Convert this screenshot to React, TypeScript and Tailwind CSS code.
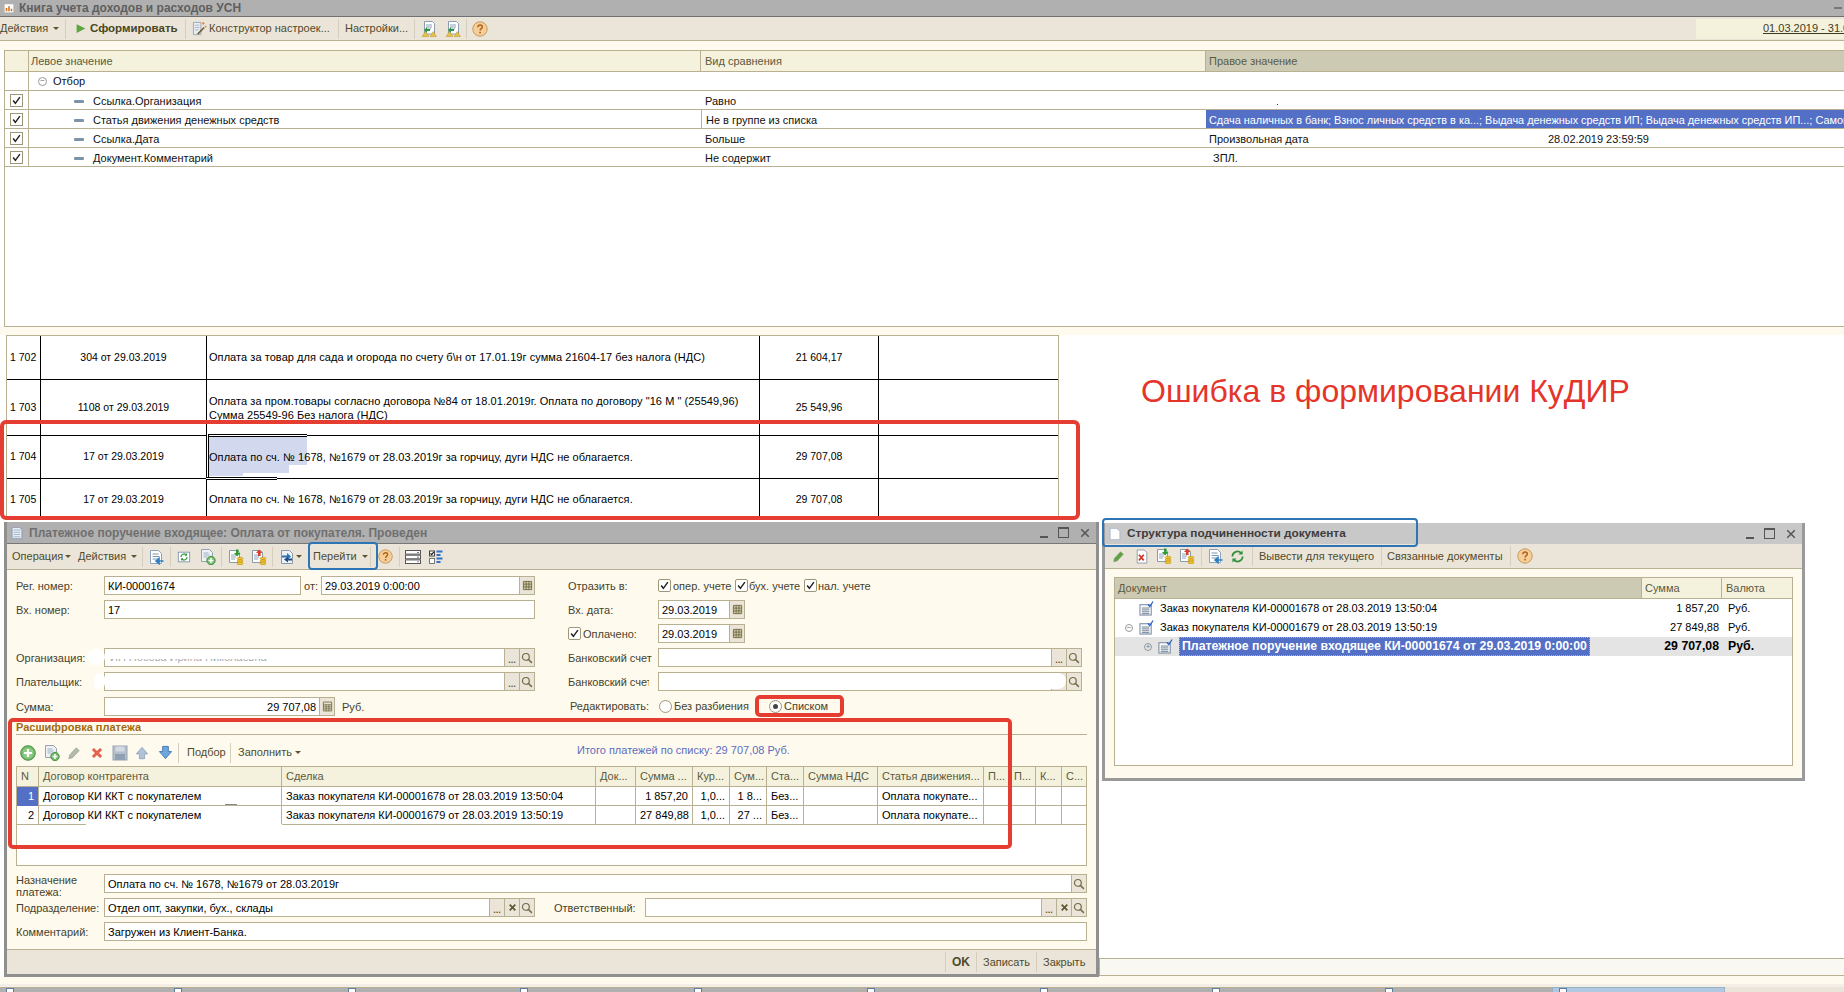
import { ReactNode } from "react";
import clsx from "clsx";

// small toolbar pictures, drawn on a 16x16 grid
function Svg({ className, children }: { className?: string; children: ReactNode }) {
  return (
    <svg viewBox="0 0 16 16" className={clsx("h-4 w-4 shrink-0", className)}>
      {children}
    </svg>
  );
}

const Help = ({ className }: { className?: string }) => (
  <Svg className={className}>
    <circle cx="8" cy="8" r="7.2" fill="#f7cd98" stroke="#c49a5c" strokeWidth="1" />
    <path d="M5.8 6.2c0-1.4 1-2.2 2.3-2.2s2.2.8 2.2 1.9c0 1.7-2.2 1.7-2.2 3.6" fill="none" stroke="#a8641a" strokeWidth="1.5" />
    <rect x="7.3" y="10.8" width="1.6" height="1.6" fill="#a8641a" />
  </Svg>
);

const Page = () => (
  <>
    <path d="M2.5 1.5h8l3 3v10h-11z" fill="#fff" stroke="#8ea3bd" strokeWidth="1" />
    <path d="M4.5 5h6M4.5 7.5h7M4.5 10h7" stroke="#7d96b5" strokeWidth="1" />
  </>
);

const DocBack = ({ className }: { className?: string }) => (
  <Svg className={className}>
    <Page />
    <path d="M15.5 12H8M8 12l3-2.6v5.2z" fill="#2e7fc0" stroke="#2e7fc0" strokeWidth="1.6" />
  </Svg>
);

const BoxRefresh = ({ className }: { className?: string }) => (
  <Svg className={className}>
    <rect x="1.5" y="2.5" width="13" height="11" fill="#fff" stroke="#7d93ad" />
    <path d="M4.5 8a3.5 3.5 0 0 1 6-2.4M11.5 8a3.5 3.5 0 0 1-6 2.4" fill="none" stroke="#2f9440" strokeWidth="1.4" />
    <path d="M11.5 3.5v3h-3zM4.5 12.5v-3h3z" fill="#2f9440" />
  </Svg>
);

const Refresh = ({ className }: { className?: string }) => (
  <Svg className={className}>
    <path d="M2.5 8a5.5 5.5 0 0 1 9.4-3.7M13.5 8a5.5 5.5 0 0 1-9.4 3.7" fill="none" stroke="#2f8f3a" strokeWidth="1.8" />
    <path d="M13.4 1.5v4.4H9zM2.6 14.5v-4.4H7z" fill="#2f8f3a" />
  </Svg>
);

const DocAdd = ({ className }: { className?: string }) => (
  <Svg className={className}>
    <path d="M1.5.5h8l3 3v9h-11z" fill="#eef2f6" stroke="#95a3ae" />
    <path d="M3.5 4h5M3.5 6h6M3.5 8h4" stroke="#9db0c2" />
    <circle cx="11" cy="11.5" r="4.2" fill="#74ba6c" stroke="#4c8f47" />
    <path d="M11 9v5M8.5 11.5h5" stroke="#fff" strokeWidth="1.5" />
  </Svg>
);

const DocCoins = ({ red, className }: { red?: boolean; className?: string }) => (
  <Svg className={className}>
    <path d="M1.5 1.5h8l2 2v10h-10z" fill="#fff" stroke="#8a9aa9" />
    <path d="M3 6h5M3 8h5M3 10h4" stroke="#90a4b8" />
    {red ? (
      <path d="M8 .5l3.5 3.5H9.6v3H7V4H5z" fill="#d8402d" />
    ) : (
      <path d="M8 7.5l3.5-3.5H9.6V.5H7V4H5z" fill="#2e9a35" transform="translate(1 0)" />
    )}
    <ellipse cx="12" cy="9.5" rx="3" ry="1.3" fill="#f3c530" stroke="#b98d10" strokeWidth=".6" />
    <ellipse cx="12" cy="12" rx="3" ry="1.3" fill="#f3c530" stroke="#b98d10" strokeWidth=".6" />
    <ellipse cx="12" cy="14.4" rx="3" ry="1.3" fill="#f3c530" stroke="#b98d10" strokeWidth=".6" />
  </Svg>
);

const DocSwap = ({ className }: { className?: string }) => (
  <Svg className={className}>
    <path d="M2.5 1.5h8l3 3v10h-11z" fill="#eef1f5" stroke="#8a97a6" />
    <path d="M3 6.5h5V4l4 3.5-4 3.5V8.5H3z" fill="#2d73b8" />
    <path d="M13 9.5H9v-2L5 10.5l4 3v-2h4z" fill="#1f4f8a" />
  </Svg>
);

const Rows = ({ className }: { className?: string }) => (
  <Svg className={className}>
    <rect x="0.5" y="1.5" width="15" height="3.6" fill="#fff" stroke="#555" />
    <rect x="0.5" y="6.2" width="15" height="3.6" fill="#fff" stroke="#555" />
    <rect x="0.5" y="10.9" width="15" height="3.6" fill="#fff" stroke="#555" />
    <path d="M12 3h2l-1 1.2zM12 7.7h2l-1 1.2zM12 12.4h2l-1 1.2z" fill="#222" />
  </Svg>
);

const CheckBars = ({ className }: { className?: string }) => (
  <Svg className={className}>
    <rect x="1.5" y="2" width="5" height="5" fill="#fff" stroke="#444" />
    <path d="M2.5 4.3l1.2 1.3 2-2.6" fill="none" stroke="#111" strokeWidth="1.2" />
    <rect x="1.5" y="9.5" width="5" height="5" fill="#fff" stroke="#777" />
    <path d="M8.5 2.5h6M8.5 6h4M8.5 9.5h6M8.5 13h4" stroke="#2f6fd0" strokeWidth="1.8" />
  </Svg>
);

const GreenPlus = ({ className }: { className?: string }) => (
  <Svg className={className}>
    <circle cx="8" cy="8" r="7.3" fill="#72b96b" stroke="#4d8f48" />
    <circle cx="8" cy="8" r="5.6" fill="#8ccb83" />
    <path d="M8 4v8M4 8h8" stroke="#fff" strokeWidth="2.2" />
  </Svg>
);

const Pencil = ({ color = "#b4b9ae", className }: { color?: string; className?: string }) => (
  <Svg className={className}>
    <path d="M10.5 2L14 5.2 6.3 13.5l-4.3 1 1-4.3z" fill={color} stroke="#8a8f84" strokeWidth=".6" />
  </Svg>
);

const RedX = ({ className }: { className?: string }) => (
  <Svg className={className}>
    <path d="M2.5 4.5l2-2L8 6l3.5-3.5 2 2L10 8l3.5 3.5-2 2L8 10l-3.5 3.5-2-2L6 8z" fill="#e8604f" stroke="#c9503f" strokeWidth=".5" />
  </Svg>
);

const Save = ({ className }: { className?: string }) => (
  <Svg className={className}>
    <rect x="1" y="1" width="14" height="14" fill="#b5c0cc" stroke="#97a3b0" />
    <rect x="3.5" y="1.5" width="9" height="5" fill="#d3dae2" />
    <rect x="3" y="9" width="10" height="6" fill="#8fa0b2" />
  </Svg>
);

const ArrowV = ({ down, className }: { down?: boolean; className?: string }) => (
  <Svg className={className}>
    <path
      d={down ? "M5 1.5h6V7h3.5L8 14.5 1.5 7H5z" : "M5 14.5h6V9h3.5L8 1.5 1.5 9H5z"}
      fill={down ? "#6ea5dc" : "#b1c3d6"}
      stroke={down ? "#3f78b0" : "#93a6ba"}
    />
  </Svg>
);

const DocX = ({ className }: { className?: string }) => (
  <Svg className={className}>
    <path d="M2.5.5h8l3 3v12h-11z" fill="#fff" stroke="#8a97a6" />
    <path d="M4.5 6l5.5 6.5M10 6l-5.5 6.5" stroke="#d2362a" strokeWidth="2" />
  </Svg>
);

const DocCheck = () => (
  <Svg className="h-[15px] w-[17px]">
    <rect x="1" y="4" width="12" height="11" fill="#fafcff" stroke="#6b7f98" />
    <path d="M3 7.5h8M3 9.5h8M3 11.5h8M3 13.5h8" stroke="#44586f" strokeWidth=".8" />
    <path d="M9.5 3.5l2 2.5L15 .5" fill="none" stroke="#2460c8" strokeWidth="1.3" />
  </Svg>
);

const Wand = ({ className }: { className?: string }) => (
  <Svg className={className}>
    <path d="M1.5 1.5h8v13h-8z" fill="#e9edf2" stroke="#99a6b3" />
    <path d="M3 4.5h5M3 7h5M3 9.5h4" stroke="#a8b5c2" />
    <path d="M6 14l7-7" stroke="#6c5a32" strokeWidth="1.6" />
    <path d="M12 1v3M10.5 2.5h3M14.5 5v2M13.5 6h2" stroke="#e0892c" strokeWidth="1" />
  </Svg>
);

const ReportArrow = ({ color, className }: { color: string; className?: string }) => (
  <Svg className={className}>
    <path d="M3.5.5h8l2 2V13h-10z" fill="#fff" stroke="#8d9db0" />
    <path d="M5 4h6M5 6h6M5 8h5" stroke="#8ba0b5" />
    <path d="M8 15.5H1l3.5-5zM15.5 15.5H9l3.3-5z" fill="#e8c14a" stroke="#b59421" strokeWidth=".5" />
    <path d="M3 9l3-3v2h3v2H6v2z" fill={color} />
  </Svg>
);

const Caret = ({ className }: { className?: string }) => (
  <span className={clsx("h-0 w-0 shrink-0 border-x-[3px] border-t-[3px] border-x-transparent border-t-[#5c5630]", className)} />
);

const Sep = ({ className }: { className?: string }) => <span className={clsx("h-[20px] w-px shrink-0 bg-[#d5cebd]", className)} />;

const WinButtons = ({ className }: { className?: string }) => (
  <div className={clsx("flex items-center", className)}>
    <span className="mt-[8px] h-[2px] w-[8px] bg-[#555]" />
    <span className="ml-[10px] h-[11px] w-[11px] border border-t-2 border-[#555]" />
    <Svg className="ml-[11px] h-[10px] w-[10px]">
      <path d="M2 2l12 12M14 2L2 14" stroke="#555" strokeWidth="2.4" />
    </Svg>
  </div>
);

type BtnKind = "dots" | "search" | "x" | "cal" | "calc";

function FieldBtn({ kind }: { kind: BtnKind }) {
  return (
    <span className="flex h-full w-[15px] shrink-0 items-center justify-center border-l border-[#b8b091] bg-[#ebe5d9]">
      {kind === "dots" && <span className="mt-[6px] text-[9px] font-bold leading-none text-[#5c5630]">...</span>}
      {kind === "x" && (
        <Svg className="h-[9px] w-[9px]">
          <path d="M3 3l10 10M13 3L3 13" stroke="#5c5630" strokeWidth="3" />
        </Svg>
      )}
      {kind === "search" && (
        <Svg className="h-[12px] w-[12px]">
          <circle cx="6.5" cy="6.5" r="4.5" fill="none" stroke="#6f6a45" strokeWidth="1.6" />
          <path d="M10 10l4.5 4.5" stroke="#6f6a45" strokeWidth="2" />
        </Svg>
      )}
      {kind === "cal" && (
        <Svg className="h-[11px] w-[11px]">
          <path d="M2 2h12v12H2zM2 6h12M2 10h12M6 2v12M10 2v12" fill="#cfc9a8" stroke="#6f6a45" strokeWidth="1.3" />
        </Svg>
      )}
      {kind === "calc" && (
        <Svg className="h-[11px] w-[11px]">
          <path d="M2 1.5h12v13H2zM2 5.5h12M2 8.5h12M2 11.5h12M6 5.5v9M10 5.5v9" fill="#e5e0c8" stroke="#6f6a45" strokeWidth="1.2" />
        </Svg>
      )}
    </span>
  );
}

function Field({ className, children, btns = [], right }: { className?: string; children?: ReactNode; btns?: BtnKind[]; right?: boolean }) {
  return (
    <div className={clsx("relative flex h-[19px] shrink-0 border border-[#b8b091] bg-white", className)}>
      <div className={clsx("min-w-0 flex-1 overflow-hidden whitespace-nowrap px-[3px] leading-[18px] text-black", right && "text-right")}>{children}</div>
      {btns.map((b, i) => (
        <FieldBtn key={i} kind={b} />
      ))}
    </div>
  );
}

function Check({ className }: { className?: string }) {
  return (
    <span className={clsx("flex h-[13px] w-[13px] shrink-0 items-center justify-center rounded-[2px] border border-[#9d977a] bg-white", className)}>
      <Svg className="h-[9px] w-[9px]">
        <path d="M2 8l4 5 8-11" fill="none" stroke="#222" strokeWidth="2.6" />
      </Svg>
    </span>
  );
}

function Radio({ on }: { on?: boolean }) {
  return (
    <span className="flex h-[13px] w-[13px] shrink-0 items-center justify-center rounded-full border border-[#9d977a] bg-white">
      {on && <span className="h-[5px] w-[5px] rounded-full bg-[#444]" />}
    </span>
  );
}

function FilterRow({ name, op, children, selected }: { name: string; op: string; children?: ReactNode; selected?: boolean }) {
  return (
    <div className="flex h-[19px] border-b border-[#b8b091]">
      <div className="flex w-[24px] items-center justify-center border-r border-[#b8b091]">
        <Check className="rounded-none" />
      </div>
      <div className="flex w-[672px] items-center pt-[3px]">
        <span className="ml-[45px] h-[3px] w-[10px] rounded-[1px] bg-[#7f93a8]" />
        <span className="ml-[9px]">{name}</span>
      </div>
      <div className={clsx("flex w-[505px] items-center pl-[4px] pt-[3px]", selected && "border-l border-[#b8b091]")}>{op}</div>
      {children}
    </div>
  );
}

type ReportRow = { n: string; doc: string; text: ReactNode; sum: string; h: string; active?: boolean; pad?: string };

const lineText = "Оплата по сч. № 1678, №1679 от 28.03.2019г за горчицу, дуги  НДС не облагается.";

const reportRows: ReportRow[] = [
  { n: "1 702", doc: "304 от 29.03.2019", text: "Оплата за товар для сада и огорода по счету б\\н от 17.01.19г сумма 21604-17 без налога (НДС)", sum: "21 604,17", h: "h-[44px]" },
  {
    n: "1 703",
    doc: "1108 от 29.03.2019",
    text: (
      <span className="block pt-[1px] leading-[14px]">
        Оплата за пром.товары согласно договора №84 от 18.01.2019г. Оплата по договору "16 М " (25549,96)
        <br />
        Сумма 25549-96 Без налога (НДС)
      </span>
    ),
    sum: "25 549,96",
    h: "h-[56px]",
  },
  { n: "1 704", doc: "17 от 29.03.2019", text: lineText, sum: "29 707,08", h: "h-[43px]", active: true },
  { n: "1 705", doc: "17 от 29.03.2019", text: lineText, sum: "29 707,08", h: "h-[38px]", pad: "pt-[4px]" },
];

const payCols = "grid grid-cols-[22px_243px_314px_40px_57px_37px_37px_37px_74px_106px_26px_26px_26px_25px]";
const payHead = ["N", "Договор контрагента", "Сделка", "Док...", "Сумма ...", "Кур...", "Сум...", "Ста...", "Сумма НДС", "Статья движения...", "П...", "П...", "К...", "С..."];

function PayRow({ n, active, deal, sum, a, b }: { n: string; active?: boolean; deal: string; sum: string; a: string; b: string }) {
  const cells: [string, string?][] = [
    ["Договор КИ ККТ с покупателем"],
    [deal],
    [""],
    [sum, "r"],
    [a, "r"],
    [b, "r"],
    ["Без..."],
    [""],
    ["Оплата покупате..."],
    [""],
    [""],
    [""],
    [""],
  ];
  return (
    <div className={clsx(payCols, "h-[19px] border-b border-[#b8b091] text-black")}>
      <div className={clsx("border-r border-[#b8b091] pr-[4px] text-right leading-[19px]", active ? "bg-[#5470c6] text-white" : "")}>{n}</div>
      {cells.map(([t, al], i) => (
        <div key={i} className={clsx("overflow-hidden whitespace-nowrap border-r border-[#b8b091] px-[4px] leading-[19px]", al && "px-[3px] text-right")}>
          {t}
        </div>
      ))}
    </div>
  );
}

function TreeRow({ indent, sign, text, sum, selected }: { indent: string; sign?: "-" | "+"; text: string; sum: string; selected?: boolean }) {
  return (
    <div className={clsx("grid h-[19px] grid-cols-[527px_80px_72px] items-center text-black", selected && "bg-[#e4e4e4] text-[12.3px] font-bold")}>
      <div className={clsx("flex h-full items-center", indent)}>
        {sign && (
          <span className="mr-[5px] flex h-[8px] w-[8px] items-center justify-center rounded-full border border-[#999] text-[8px] font-normal leading-none text-[#777]">{sign === "-" ? "−" : "+"}</span>
        )}
        <DocCheck />
        <span className={clsx("ml-[5px] flex h-full items-center", selected && "-ml-[1px] w-[411px] whitespace-nowrap bg-[#5470c6] pl-[3px] text-white outline-1 -outline-offset-1 outline-dotted outline-[#9fb0e2]")}>{text}</span>
      </div>
      <div className="pr-[3px] text-right">{sum}</div>
      <div className="pl-[6px]">Руб.</div>
    </div>
  );
}

export default function App() {
  return (
    <div className="relative h-[992px] w-[1844px] overflow-hidden bg-white font-['Liberation_Sans',sans-serif] text-[11px] text-[#111]">
      {/* report window title */}
      <div className="flex h-[17px] items-center border-b border-[#707070] bg-[#b0b0b0]">
        <Svg className="ml-[4px] h-[12px] w-[10px]">
          <rect x="1" y="2" width="14" height="13" fill="#fff" />
          <path d="M4 13V8M8 13V5M12 13V9" stroke="#d2701e" strokeWidth="2.5" />
        </Svg>
        <span className="ml-[5px] text-[12px] font-bold text-[#5f5f5f]">Книга учета доходов и расходов УСН</span>
        <span className="ml-auto mr-[2px] h-[2px] w-[8px] bg-[#777]" />
      </div>

      {/* report toolbar */}
      <div className="flex h-[24px] items-center border-b border-[#b8b091] bg-[#ebe5d9] text-[#4f4b2d]">
        <div className="flex w-[65px] items-center">
          Действия
          <Caret className="ml-[5px]" />
        </div>
        <Sep />
        <Svg className="ml-[10px] h-[11px] w-[10px]">
          <path d="M1 1l14 7-14 7z" fill="#5da63f" />
        </Svg>
        <span className="ml-[4px] w-[95px] whitespace-nowrap text-[11.5px] font-bold text-[#4a4620]">Сформировать</span>
        <Sep />
        <Wand className="ml-[6px] h-[15px] w-[15px]" />
        <span className="ml-[2px] w-[129px] whitespace-nowrap">Конструктор настроек...</span>
        <Sep />
        <span className="ml-[6px] w-[69px] whitespace-nowrap">Настройки...</span>
        <Sep />
        <ReportArrow color="#2f9440" className="ml-[6px]" />
        <ReportArrow color="#2f9440" className="ml-[8px]" />
        <Sep className="ml-[5px]" />
        <Help className="ml-[5px]" />
        <div className="ml-auto flex h-[20px] w-[148px] items-center bg-[#f4f1dc] pl-[67px]">
          <span className="whitespace-nowrap text-[#3f3c1e] underline">01.03.2019 - 31.03.2019</span>
        </div>
      </div>
      <div className="h-[9px] bg-[#fffaee]" />

      {/* filter settings */}
      <div className="ml-[4px] h-[277px] border-b border-l border-[#b8b091]">
        <div className="flex h-[22px] border-y border-[#b8b091] bg-[#f4f1dc] text-[#5c5a40]">
          <div className="w-[24px] border-r border-[#b8b091]" />
          <div className="flex w-[672px] items-center border-r border-[#b8b091] pl-[2px]">Левое значение</div>
          <div className="flex w-[505px] items-center border-r border-[#b8b091] pl-[4px]">Вид сравнения</div>
          <div className="flex flex-1 items-center bg-[#cdcab4] pl-[3px]">Правое значение</div>
        </div>
        <div className="flex h-[19px] items-center border-b border-[#b8b091]">
          <div className="h-full w-[24px] border-r border-[#b8b091]" />
          <span className="ml-[9px] flex h-[9px] w-[9px] items-center justify-center rounded-full border border-[#999] text-[8px] leading-none text-[#777]">−</span>
          <span className="ml-[6px]">Отбор</span>
        </div>
        <FilterRow name="Ссылка.Организация" op="Равно">
          <div className="relative flex-1">
            <span className="absolute left-[71px] top-[13px] h-[1px] w-[1px] bg-[#333]" />
          </div>
        </FilterRow>
        <FilterRow name="Статья движения денежных средств" op="Не в группе из списка" selected>
          <div className="flex-1 overflow-hidden whitespace-nowrap bg-[#5470c6] pl-[3px] pt-[1px] text-[10.9px] leading-[18px] text-white">
            Сдача наличных в банк; Взнос личных средств в ка...; Выдача денежных средств ИП; Выдача денежных средств ИП...; Самоинкассация
          </div>
        </FilterRow>
        <FilterRow name="Ссылка.Дата" op="Больше">
          <div className="flex flex-1 items-center pl-[3px] pt-[3px]">
            <span className="w-[339px]">Произвольная дата</span>
            <span>28.02.2019 23:59:59</span>
          </div>
        </FilterRow>
        <FilterRow name="Документ.Комментарий" op="Не содержит">
          <div className="flex flex-1 items-center pl-[7px] pt-[3px]">ЗПЛ.</div>
        </FilterRow>
      </div>
      <div className="h-[8px] bg-[#fffaee]" />

      {/* spreadsheet result */}
      <div className="flex h-[641px] flex-col">
        <div className="ml-[6px] h-[182px] w-[1053px] border-x border-t border-[#b8b091] text-[10.5px] text-black">
          {reportRows.map((r) => (
            <div key={r.n} className={clsx("grid grid-cols-[34px_166px_553px_119px_1fr] border-b border-black", r.h)}>
              <div className={clsx("flex items-center border-r border-black pl-[3px]", r.pad)}>{r.n}</div>
              <div className={clsx("flex items-center justify-center border-r border-black", r.pad)}>{r.doc}</div>
              <div className={clsx("relative flex items-center border-r border-black pl-[2px] text-[11px] tracking-[0.06px]", r.pad)}>
                {r.active && (
                  <>
                    <span className="absolute left-[1px] top-[1px] h-[28px] w-[99px] bg-[#d2d9ee]" />
                    <span className="absolute left-[1px] top-[29px] h-[8px] w-[81px] bg-[#d2d9ee]" />
                    <span className="absolute left-[1px] top-[37px] h-[3px] w-[35px] bg-[#d2d9ee]" />
                    <span className="absolute -top-[2px] left-[-1px] h-[3px] w-[101px] border-y border-black bg-white" />
                    <span className="absolute -top-[2px] left-[-1px] h-[44px] w-[3px] border-x border-black bg-white" />
                    <span className="absolute left-[-1px] top-[41px] h-[3px] w-[71px] border-y border-black bg-white" />
                  </>
                )}
                <span className="relative">{r.text}</span>
              </div>
              <div className={clsx("flex items-center justify-center border-r border-black", r.pad)}>{r.sum}</div>
              <div />
            </div>
          ))}
        </div>
        <div className="ml-auto mt-auto h-[18px] w-[745px] border border-r-0 border-[#b8b091] bg-[#faf8f2]" />
      </div>
      <div className="h-[8px] bg-[#fffaee]" />
      <div className="h-[3px] bg-[#f3efe6]" />

      {/* task bar, cut by the bottom of the picture */}
      <div className="flex h-[5px] bg-[#ebe5d9]">
        {["w-[168px]", "w-[174px]", "w-[172px]", "w-[174px]", "w-[173px]", "w-[173px]", "w-[172px]", "w-[173px]", "w-[173px]"].map((w, i) => (
          <div key={i} className={clsx(w, "border-r border-t border-[#b8b091] bg-[#b0b0b0] pl-[6px]")}>
            <span className="block h-[4px] w-[8px] border border-b-0 border-[#5a7da0] bg-white" />
          </div>
        ))}
        <div className="w-[173px] border-x border-t border-[#9ab0c4] bg-[#b0c9e0] pl-[6px]">
          <span className="block h-[4px] w-[8px] border border-b-0 border-[#5a7da0] bg-white" />
        </div>
      </div>

      <div className="pointer-events-none absolute left-[1141px] top-[371px] whitespace-nowrap text-[32px] leading-[40px] text-[#e5352b]">Ошибка в формировании КуДИР</div>

      {/* payment order window */}
      <div className="absolute left-[4px] top-[522px] flex h-[455px] w-[1095px] flex-col border-x-[3px] border-b-[3px] border-[#8f8f8f] bg-[#fffaee] text-[#45432c]">
        <div className="flex h-[22px] shrink-0 items-center border-b border-[#777] bg-[#b0b0b0]">
          <Svg className="ml-[4px] h-[14px] w-[12px]">
            <path d="M1.5.5h10l3 3v12h-13z" fill="#e8eef5" stroke="#7f94ad" />
            <path d="M3.5 4h9M3.5 7h9M3.5 10h9M3.5 13h9" stroke="#8ea5c0" />
          </Svg>
          <span className="ml-[6px] text-[12px] font-bold text-[#6f6f6f]">Платежное поручение входящее: Оплата от покупателя. Проведен</span>
          <WinButtons className="ml-auto mr-[6px]" />
        </div>

        <div className="flex h-[26px] shrink-0 items-center border-b border-[#b8b091] bg-[#ebe5d9] text-[#4f4b2d]">
          <span className="ml-[5px] w-[48px]">Операция</span>
          <Caret className="ml-[5px]" />
          <span className="ml-[7px] w-[48px]">Действия</span>
          <Caret className="ml-[5px]" />
          <Sep className="ml-[5px]" />
          <DocBack className="ml-[5px]" />
          <Sep className="ml-[6px]" />
          <BoxRefresh className="ml-[6px] h-[14px] w-[14px]" />
          <DocAdd className="ml-[9px]" />
          <Sep className="ml-[5px]" />
          <DocCoins className="ml-[6px]" />
          <DocCoins red className="ml-[7px]" />
          <Sep className="ml-[5px]" />
          <DocSwap className="ml-[6px]" />
          <Caret className="ml-[1px]" />
          <span className="ml-[11px] w-[44px]">Перейти</span>
          <Caret className="ml-[5px]" />
          <Sep className="ml-[2px]" />
          <Help className="ml-[7px] h-[15px] w-[15px]" />
          <Sep className="ml-[6px]" />
          <Rows className="ml-[5px]" />
          <CheckBars className="ml-[7px]" />
        </div>

        <div className="flex h-[147px] shrink-0">
          <div className="ml-[9px] w-[519px]">
            <div className="mt-[6px] flex items-center">
              <span className="w-[88px] pt-[1px]">Рег. номер:</span>
              <Field className="w-[197px]">КИ-00001674</Field>
              <span className="ml-[3px] w-[17px] pt-[1px]">от:</span>
              <Field className="w-[214px]" btns={["cal"]}>
                29.03.2019  0:00:00
              </Field>
            </div>
            <div className="mt-[5px] flex items-center">
              <span className="w-[88px] pt-[1px]">Вх. номер:</span>
              <Field className="w-[431px]">17</Field>
            </div>
            <div className="relative mt-[29px] flex items-center">
              <span className="w-[88px] pt-[1px]">Организация:</span>
              <Field className="w-[431px]" btns={["dots", "search"]}>
                <span className="ml-[2px] mt-[10px] block h-[4px] overflow-hidden">
                  <span className="-mt-[8px] block leading-[12px] text-[#aaa]">ИП Носова Ирина Николаевна</span>
                </span>
              </Field>
              <span className="absolute left-[71px] top-[1px] h-[16px] w-[18px] rounded-full bg-white" />
            </div>
            <div className="relative mt-[5px] flex items-center">
              <span className="w-[88px] pt-[1px]">Плательщик:</span>
              <Field className="w-[431px]" btns={["dots", "search"]} />
              <span className="absolute left-[78px] top-[1px] h-[16px] w-[11px] rounded-full bg-white" />
            </div>
            <div className="mt-[6px] flex items-center">
              <span className="w-[88px] pt-[1px]">Сумма:</span>
              <Field className="h-[18px] w-[231px]" btns={["calc"]} right>
                29 707,08
              </Field>
              <span className="ml-[7px] pt-[1px]">Руб.</span>
            </div>
          </div>

          <div className="ml-[33px] w-[514px]">
            <div className="mt-[6px] flex h-[19px] items-center">
              <span className="w-[90px] pt-[1px]">Отразить в:</span>
              <Check />
              <span className="ml-[2px] w-[62px] pt-[1px]">опер. учете</span>
              <Check />
              <span className="ml-[1px] w-[55px] pt-[1px]">бух. учете</span>
              <Check />
              <span className="ml-[1px] pt-[1px]">нал. учете</span>
            </div>
            <div className="mt-[5px] flex items-center">
              <span className="w-[90px] pt-[1px]">Вх. дата:</span>
              <Field className="w-[87px]" btns={["cal"]}>
                29.03.2019
              </Field>
            </div>
            <div className="mt-[5px] flex items-center">
              <Check />
              <span className="ml-[2px] w-[75px] pt-[1px]">Оплачено:</span>
              <Field className="w-[87px]" btns={["cal"]}>
                29.03.2019
              </Field>
            </div>
            <div className="mt-[5px] flex items-center">
              <span className="w-[84px] overflow-hidden whitespace-nowrap pt-[1px]">Банковский счет:</span>
              <span className="w-[6px]" />
              <Field className="w-[424px]" btns={["dots", "search"]} />
            </div>
            <div className="relative mt-[5px] flex items-center">
              <span className="w-[81px] overflow-hidden whitespace-nowrap pt-[1px]">Банковский счет:</span>
              <span className="w-[9px]" />
              <Field className="w-[424px]" btns={["dots", "search"]} />
              <span className="absolute left-[476px] top-[1px] h-[16px] w-[22px] rounded-r-full bg-white" />
            </div>
            <div className="mt-[6px] flex h-[18px] items-center pl-[2px]">
              <span className="w-[89px] pt-[1px]">Редактировать:</span>
              <Radio />
              <span className="ml-[2px] w-[95px] pt-[1px]">Без разбиения</span>
              <Radio on />
              <span className="ml-[2px] pt-[1px]">Списком</span>
            </div>
          </div>
        </div>

        <div className="ml-[9px] w-[1071px]">
          <div className="mt-[3px] h-[15px] border-b border-[#b8b091] font-bold leading-[14px] text-[#a06a10]">Расшифровка платежа</div>
          <div className="flex h-[31px] items-center pt-[4px] text-[#4f4b2d]">
            <GreenPlus className="ml-[4px]" />
            <DocAdd className="ml-[8px]" />
            <Pencil className="ml-[7px] h-[14px] w-[14px]" />
            <RedX className="ml-[9px] h-[14px] w-[14px]" />
            <Save className="ml-[8px]" />
            <ArrowV className="ml-[7px] h-[14px] w-[14px]" />
            <ArrowV down className="ml-[9px] h-[15px] w-[15px]" />
            <Sep className="ml-[5px]" />
            <span className="ml-[8px] w-[37px]">Подбор</span>
            <Sep className="ml-[6px]" />
            <span className="ml-[7px] w-[52px]">Заполнить</span>
            <Caret className="ml-[5px]" />
            <span className="mb-[4px] ml-[276px] whitespace-nowrap text-[#5b6cc0]">Итого платежей по списку: 29 707,08 Руб.</span>
          </div>
          <div className="relative h-[100px] border-x border-b border-[#b8b091] bg-white">
            <div className={clsx(payCols, "h-[21px] border-y border-[#b8b091] bg-[#f4f1dc] text-[#5c5a40]")}>
              {payHead.map((h, i) => (
                <div key={i} className="overflow-hidden whitespace-nowrap border-r border-[#b8b091] px-[4px] leading-[19px]">
                  {h}
                </div>
              ))}
            </div>
            <PayRow n="1" active deal="Заказ покупателя КИ-00001678 от 28.03.2019 13:50:04" sum="1 857,20" a="1,0..." b="1 8..." />
            <PayRow n="2" deal="Заказ покупателя КИ-00001679 от 28.03.2019 13:50:19" sum="27 849,88" a="1,0..." b="27 ..." />
            <span className="absolute left-[69px] top-[58px] h-[3px] w-[196px] bg-white" />
            <span className="absolute left-[208px] top-[38px] h-[1px] w-[12px] bg-[#888]" />
          </div>
        </div>

        <div className="ml-[9px] mt-[8px] flex h-[18px] items-start">
          <span className="w-[88px] leading-[12px]">
            Назначение
            <br />
            платежа:
          </span>
          <Field className="h-[18px] w-[983px]" btns={["search"]}>
            Оплата по сч. № 1678, №1679 от 28.03.2019г
          </Field>
        </div>
        <div className="ml-[9px] mt-[6px] flex items-center">
          <span className="w-[88px] pt-[1px]">Подразделение:</span>
          <Field className="w-[431px]" btns={["dots", "x", "search"]}>
            Отдел опт, закупки, бух., склады
          </Field>
          <span className="ml-[19px] w-[91px] pt-[1px]">Ответственный:</span>
          <Field className="w-[442px]" btns={["dots", "x", "search"]} />
        </div>
        <div className="ml-[9px] mt-[5px] flex items-center">
          <span className="w-[88px] pt-[1px]">Комментарий:</span>
          <Field className="w-[983px]">Загружен из Клиент-Банка.</Field>
        </div>

        <div className="mt-auto flex h-[25px] shrink-0 items-center border-t border-[#b8b091] bg-[#ebe5d9] text-[#4f4b2d]">
          <Sep className="ml-[938px]" />
          <span className="ml-[6px] text-[12px] font-bold">OK</span>
          <Sep className="ml-[6px]" />
          <span className="ml-[6px]">Записать</span>
          <Sep className="ml-[6px]" />
          <span className="ml-[6px]">Закрыть</span>
        </div>
      </div>

      {/* subordination window */}
      <div className="absolute left-[1102px] top-[523px] flex h-[258px] w-[703px] flex-col border-x-[3px] border-b-[3px] border-[#9a9a9a] bg-[#fffaee] text-[#45432c]">
        <div className="flex h-[21px] shrink-0 items-center bg-[#c8c8c8]">
          <Svg className="ml-[4px] h-[14px] w-[12px]">
            <path d="M1.5.5h9l4 4v11h-13z" fill="#fff" stroke="#9fb3c8" />
          </Svg>
          <span className="ml-[6px] text-[11.8px] font-bold text-[#3d3d3d]">Структура подчиненности документа</span>
          <WinButtons className="ml-auto mr-[6px]" />
        </div>
        <div className="flex h-[25px] shrink-0 items-center border-b border-[#b8b091] bg-[#ebe5d9] text-[#4f4b2d]">
          <Pencil color="#5da63f" className="ml-[7px] h-[13px] w-[13px]" />
          <DocX className="ml-[10px] h-[15px] w-[14px]" />
          <DocCoins className="ml-[7px]" />
          <DocCoins red className="ml-[7px]" />
          <Sep className="ml-[6px]" />
          <DocBack className="ml-[5px]" />
          <Refresh className="ml-[7px] h-[15px] w-[15px]" />
          <Sep className="ml-[7px]" />
          <span className="ml-[6px] w-[122px] whitespace-nowrap">Вывести для текущего</span>
          <Sep />
          <span className="ml-[5px] w-[123px] whitespace-nowrap">Связанные документы</span>
          <Sep />
          <Help className="ml-[6px]" />
        </div>
        <div className="ml-[9px] mt-[8px] h-[189px] w-[679px] border border-[#b8b091] bg-white">
          <div className="grid h-[21px] grid-cols-[527px_80px_70px] border-b border-[#b8b091] bg-[#f4f1dc] leading-[20px] text-[#5c5a40]">
            <div className="border-r border-[#b8b091] bg-[#cdcab4] pl-[3px]">Документ</div>
            <div className="border-r border-[#b8b091] pl-[3px]">Сумма</div>
            <div className="pl-[4px]">Валюта</div>
          </div>
          <TreeRow indent="pl-[23px]" text="Заказ покупателя КИ-00001678 от 28.03.2019 13:50:04" sum="1 857,20" />
          <TreeRow indent="pl-[10px]" sign="-" text="Заказ покупателя КИ-00001679 от 28.03.2019 13:50:19" sum="27 849,88" />
          <TreeRow indent="pl-[29px]" sign="+" text="Платежное поручение входящее КИ-00001674 от 29.03.2019 0:00:00" sum="29 707,08" selected />
        </div>
      </div>

      {/* annotation frames */}
      <div className="pointer-events-none absolute left-0 top-[420px] h-[100px] w-[1080px] rounded-[6px] border-[4px] border-[#e53d32]" />
      <div className="pointer-events-none absolute left-[8px] top-[718px] h-[131px] w-[1004px] rounded-[5px] border-[4px] border-[#e53d32]" />
      <div className="pointer-events-none absolute left-[755px] top-[695px] h-[22px] w-[89px] rounded-[5px] border-[4px] border-[#e53d32]" />
      <div className="pointer-events-none absolute left-[308px] top-[542px] h-[28px] w-[70px] rounded-[4px] border-2 border-[#2e75b6]" />
      <div className="pointer-events-none absolute left-[1102px] top-[518px] h-[29px] w-[316px] rounded-[4px] border-2 border-[#2e75b6]" />
    </div>
  );
}
